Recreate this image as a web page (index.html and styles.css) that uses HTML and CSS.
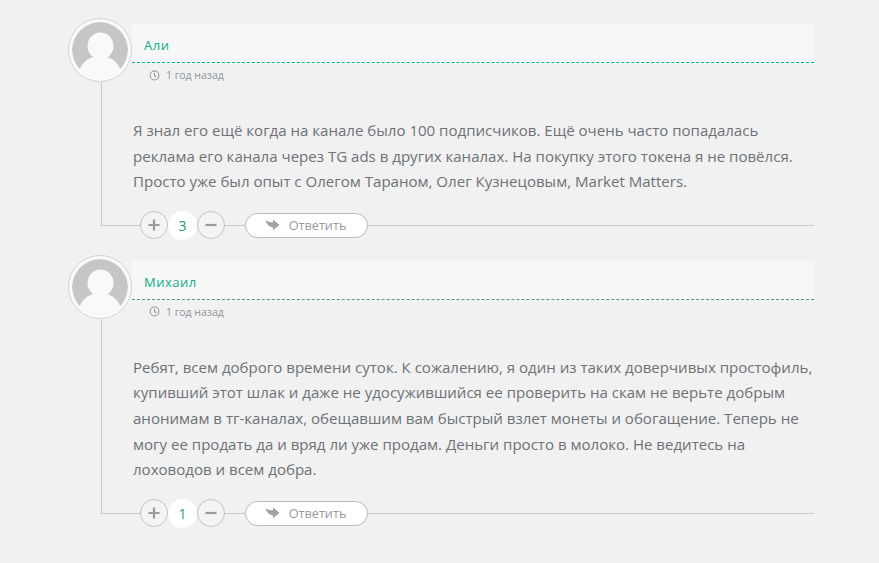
FILE: index.html
```html
<!DOCTYPE html>
<html lang="ru">
<head>
    <meta charset="UTF-8">
    <meta name="viewport" content="width=device-width, initial-scale=1.0">
    <title>Комментарии</title>
    <link rel="stylesheet" href="styles.css">
</head>
<body>
    <div class="comment-list">
        <div class="comment">
            <div class="comment-head">
                <div class="avatar">
                    <svg viewBox="0 0 56 56" width="56" height="56">
                        <circle cx="28" cy="28" r="28" fill="#c6c6c6"/>
                        <ellipse cx="28.5" cy="24" rx="13" ry="13.5" fill="#f9f9f9"/>
                        <ellipse cx="28" cy="54" rx="21.5" ry="20" fill="#f9f9f9"/>
                    </svg>
                </div>
                <div class="head-info">
                    <div class="author-bar"><span class="author">Али</span></div>
                    <div class="comment-time">
                        <svg viewBox="0 0 12 12" width="11" height="11">
                            <circle cx="6" cy="6" r="4.8" fill="none" stroke="#8f959b" stroke-width="1.1"/>
                            <path d="M6 3v3.2l2 1.2" fill="none" stroke="#8f959b" stroke-width="1.1"/>
                        </svg>
                        1 год назад
                    </div>
                </div>
            </div>
            <div class="comment-body">
                <p class="comment-text">Я знал его ещё когда на канале было 100 подписчиков. Ещё очень часто попадалась реклама его канала через TG ads в других каналах. На покупку этого токена я не повёлся. Просто уже был опыт с Олегом Тараном, Олег Кузнецовым, Market Matters.</p>
                <div class="comment-actions">
                    <button class="vote-btn">
                        <svg viewBox="0 0 14 14" width="14" height="14"><path d="M7 1.5v11M1.5 7h11" stroke="#9a9a9a" stroke-width="2.2"/></svg>
                    </button>
                    <span class="vote-count">3</span>
                    <button class="vote-btn">
                        <svg viewBox="0 0 14 14" width="14" height="14"><path d="M1.5 7h11" stroke="#9a9a9a" stroke-width="2.2"/></svg>
                    </button>
                    <button class="reply-btn">
                        <svg viewBox="0 0 16 12" width="15" height="12"><path d="M0.5 1C3 2.6 5 3.2 8.5 3V0L15.5 5.6 8.5 11.5V8.4C5 8.4 2 6 0.5 1Z" fill="#a3a3a3"/></svg>
                        Ответить
                    </button>
                </div>
            </div>
        </div>

        <div class="comment">
            <div class="comment-head">
                <div class="avatar">
                    <svg viewBox="0 0 56 56" width="56" height="56">
                        <circle cx="28" cy="28" r="28" fill="#c6c6c6"/>
                        <ellipse cx="28.5" cy="24" rx="13" ry="13.5" fill="#f9f9f9"/>
                        <ellipse cx="28" cy="54" rx="21.5" ry="20" fill="#f9f9f9"/>
                    </svg>
                </div>
                <div class="head-info">
                    <div class="author-bar author-bar-dark"><span class="author">Михаил</span></div>
                    <div class="comment-time">
                        <svg viewBox="0 0 12 12" width="11" height="11">
                            <circle cx="6" cy="6" r="4.8" fill="none" stroke="#8f959b" stroke-width="1.1"/>
                            <path d="M6 3v3.2l2 1.2" fill="none" stroke="#8f959b" stroke-width="1.1"/>
                        </svg>
                        1 год назад
                    </div>
                </div>
            </div>
            <div class="comment-body">
                <p class="comment-text">Ребят, всем доброго времени суток. К сожалению, я один из таких доверчивых простофиль, купивший этот шлак и даже не удосужившийся ее проверить на скам не верьте добрым анонимам в тг-каналах, обещавшим вам быстрый взлет монеты и обогащение. Теперь не могу ее продать да и вряд ли уже продам. Деньги просто в молоко. Не ведитесь на лоховодов и всем добра.</p>
                <div class="comment-actions">
                    <button class="vote-btn">
                        <svg viewBox="0 0 14 14" width="14" height="14"><path d="M7 1.5v11M1.5 7h11" stroke="#9a9a9a" stroke-width="2.2"/></svg>
                    </button>
                    <span class="vote-count">1</span>
                    <button class="vote-btn">
                        <svg viewBox="0 0 14 14" width="14" height="14"><path d="M1.5 7h11" stroke="#9a9a9a" stroke-width="2.2"/></svg>
                    </button>
                    <button class="reply-btn">
                        <svg viewBox="0 0 16 12" width="15" height="12"><path d="M0.5 1C3 2.6 5 3.2 8.5 3V0L15.5 5.6 8.5 11.5V8.4C5 8.4 2 6 0.5 1Z" fill="#a3a3a3"/></svg>
                        Ответить
                    </button>
                </div>
            </div>
        </div>
    </div>
</body>
</html>
```

FILE: styles.css
```css
body {
    margin: 0;
    padding: 0;
    background: #f1f1f1;
    font-family: 'Open Sans', 'Noto Sans', Arial, sans-serif;
}
.comment-list {
    width: 746px;
    margin-left: 68px;
    padding-top: 18px;
}
.comment {
    margin-bottom: 29px;
}
.comment-head {
    display: flex;
    height: 64px;
}
.avatar {
    box-sizing: border-box;
    width: 64px;
    height: 64px;
    flex-shrink: 0;
    padding: 3px;
    border: 1px solid #d4d4d4;
    border-radius: 50%;
    background: #fafafa;
}
.avatar svg {
    display: block;
    border-radius: 50%;
}
.head-info {
    flex: 1;
    margin-top: 6px;
}
.author-bar {
    box-sizing: border-box;
    height: 39px;
    padding: 9px 0 0 12px;
    background: #f7f7f7;
    border-bottom: 1px dashed #00b894;
}
.author-bar-dark {
    border-bottom-color: #4d9a85;
}
.author {
    font-size: 13px;
    letter-spacing: 0.5px;
    color: #0fae8c;
}
.comment-time {
    display: flex;
    align-items: center;
    gap: 6px;
    margin: 5px 0 0 17px;
    font-size: 10.5px;
    color: #8f959b;
}
.comment-body {
    margin-left: 33px;
    padding: 36px 0 0 31px;
    border-left: 1px solid #c9c9c9;
    border-bottom: 1px solid #c9c9c9;
}
.comment-text {
    margin: 0;
    font-size: 15.05px;
    line-height: 25.6px;
    color: #6d7277;
}
.comment-actions {
    display: flex;
    align-items: center;
    margin: 16px 0 -15px 7px;
}
.vote-btn {
    box-sizing: border-box;
    width: 28px;
    height: 28px;
    display: flex;
    align-items: center;
    justify-content: center;
    padding: 0;
    border: 1px solid #c4c4c4;
    border-radius: 50%;
    background: #f4f4f4;
}
.vote-count {
    width: 29px;
    height: 29px;
    line-height: 29px;
    text-align: center;
    border-radius: 50%;
    background: #fff;
    font-size: 14px;
    color: #1f9a70;
}
.reply-btn {
    box-sizing: border-box;
    width: 123px;
    height: 25px;
    margin-left: 20px;
    display: flex;
    align-items: center;
    justify-content: center;
    gap: 9px;
    padding: 0 2px 0 0;
    border: 1px solid #b9b9b9;
    border-radius: 13px;
    background: #fff;
    font-family: inherit;
    font-size: 12.7px;
    color: #9a9a9a;
}
```
